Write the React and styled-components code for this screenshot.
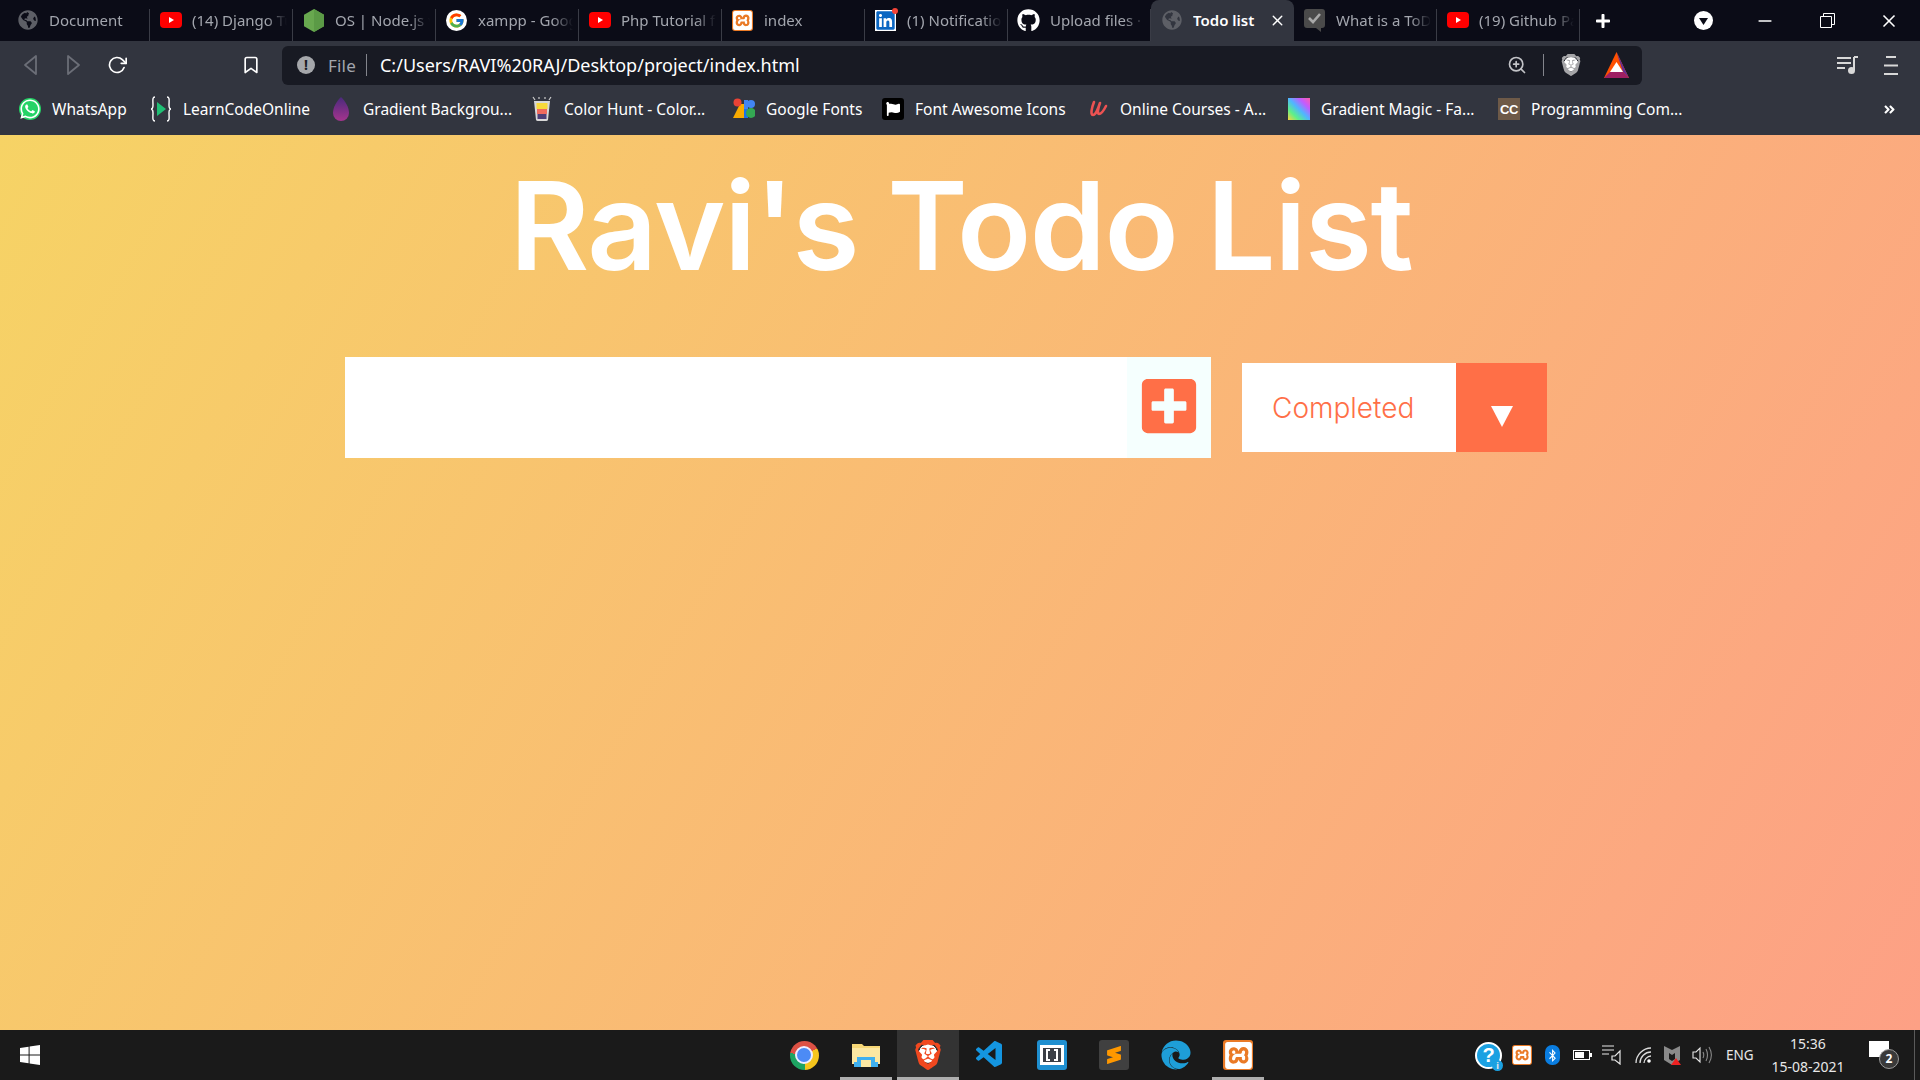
import React from 'react';
import styled, { createGlobalStyle } from 'styled-components';
import { FaGlobeAmericas, FaLinkedin, FaGithub, FaWhatsapp, FaPlusSquare, FaFlag, FaEdge, FaBluetoothB, FaPlus, FaAngleDoubleRight } from 'react-icons/fa';
import { FcGoogle } from 'react-icons/fc';
import { SiXampp, SiBrave, SiSublimetext } from 'react-icons/si';
import { VscVscode } from 'react-icons/vsc';
import { FiMinus, FiX, FiZoomIn, FiRotateCw, FiBookmark } from 'react-icons/fi';

const GlobalStyle = createGlobalStyle`
  html, body { margin: 0; padding: 0; }
  body { font-family: "Noto Sans", "Open Sans", sans-serif; background: #32353f; }
  * { box-sizing: border-box; }
`;

const Page = styled.div`
  width: 1920px;
  height: 1080px;
  display: flex;
  flex-direction: column;
  overflow: hidden;
`;

/* ---- browser chrome ---- */
const TabBar = styled.div`
  height: 41px;
  flex: none;
  background: #0b0c17;
  display: flex;
  align-items: stretch;
  padding-left: 7px;
`;
const Tab = styled.div`
  width: 143px;
  flex: none;
  display: flex;
  align-items: center;
  padding: 0 ${(p) => (p.$active ? 8 : 6)}px 1px 9px;
  gap: 10px;
  color: ${(p) => (p.$active ? '#ffffff' : '#a3a6ae')};
  font-size: 15px;
  font-weight: ${(p) => (p.$active ? 600 : 400)};
  background: ${(p) => (p.$active ? '#32353f' : 'transparent')};
  border-radius: ${(p) => (p.$active ? '8px 8px 0 0' : '0')};
  position: relative;
  &::after {
    content: "";
    display: ${(p) => (p.$active ? 'none' : 'block')};
    position: absolute;
    right: 0;
    top: 9px;
    bottom: 0;
    width: 1px;
    background: #3a3c46;
  }
`;
const TabTitle = styled.span`
  flex: 1;
  white-space: nowrap;
  overflow: hidden;
  -webkit-mask-image: ${(p) => (p.$active ? 'none' : 'linear-gradient(to right, #000 78%, transparent 100%)')};
  mask-image: ${(p) => (p.$active ? 'none' : 'linear-gradient(to right, #000 78%, transparent 100%)')};
`;
const TabIcon = styled.span`
  width: 23px;
  height: 23px;
  flex: none;
  display: flex;
  align-items: center;
  justify-content: center;
  position: relative;
  color: ${(p) => p.$color || '#fff'};
  font-size: ${(p) => p.$size || 22}px;
`;
const TabClose = styled.span`
  display: flex;
  color: #fff;
  font-size: 17px;
`;
const NewTab = styled.span`
  width: 46px;
  display: flex;
  align-items: center;
  justify-content: center;
  color: #fff;
  font-size: 16px;
`;
const WindowControls = styled.div`
  margin-left: auto;
  display: flex;
  align-items: center;
  color: #fff;
`;
const WinButton = styled.span`
  width: 62px;
  display: flex;
  align-items: center;
  justify-content: center;
  font-size: 20px;
`;
const Toolbar = styled.div`
  height: 48px;
  flex: none;
  background: #32353f;
  display: flex;
  align-items: center;
  padding: 0 8px 0 9px;
`;
const ToolSlot = styled.span`
  width: 43px;
  flex: none;
  display: flex;
  align-items: center;
  justify-content: center;
  color: #fff;
  font-size: 20px;
  margin-left: ${(p) => p.$ml || 0}px;
`;
const AddressBar = styled.div`
  width: 1360px;
  height: 39px;
  flex: none;
  margin-left: 10px;
  background: #181a23;
  border-radius: 6px;
  display: flex;
  align-items: center;
  padding: 0 13px 0 15px;
`;
const AddrInfo = styled.span`
  width: 18px;
  height: 18px;
  border-radius: 50%;
  background: #a5a7ab;
  color: #181a23;
  font-size: 14px;
  font-weight: 700;
  line-height: 18px;
  text-align: center;
`;
const FileLabel = styled.span`
  margin-left: 13px;
  color: #a3a6ae;
  font-size: 17px;
  letter-spacing: 0.2px;
`;
const AddrDivider = styled.span`
  width: 1px;
  height: 22px;
  background: #83858c;
  margin: ${(p) => p.$m || '0 13px 0 10px'};
`;
const UrlText = styled.span`
  color: #fff;
  font-size: 18px;
`;
const AddrRight = styled.div`
  margin-left: auto;
  display: flex;
  align-items: center;
  gap: 0;
  color: #c2c3c7;
`;
const BraveShield = styled.span`
  display: flex;
  margin-right: 22px;
  background: radial-gradient(circle at 50% 45%, #fff 0 42%, transparent 44%);
  color: #a5a5a8;
  font-size: 22px;
`;
const ToolRight = styled.div`
  margin-left: auto;
  display: flex;
  align-items: center;
`;
const BookmarksBar = styled.div`
  height: 46px;
  flex: none;
  background: #32353f;
  display: flex;
  align-items: center;
  padding: 0 24px 6px 19px;
  color: #fff;
  font-size: 15.5px;
`;
const Bookmark = styled.div`
  width: ${(p) => p.$w}px;
  flex: none;
  display: flex;
  align-items: center;
  gap: 11px;
  white-space: nowrap;
`;
const BookIcon = styled.span`
  width: 22px;
  height: 22px;
  flex: none;
  display: flex;
  align-items: center;
  justify-content: center;
  font-size: ${(p) => p.$size || 22}px;
  color: ${(p) => p.$color || '#fff'};
  background: ${(p) => p.$bg || 'transparent'};
  border-radius: ${(p) => p.$radius || 0}px;
`;
const CcText = styled.span`
  font-family: "Liberation Sans", sans-serif;
  font-size: 13px;
  font-weight: 700;
  color: #fff;
  letter-spacing: -0.5px;
`;
const MoreBookmarks = styled.span`
  margin-left: auto;
  display: flex;
  font-size: 13px;
`;

/* ---- the todo page ---- */
const Main = styled.main`
  flex: 1;
  background-image: linear-gradient(120deg, #f6d365 0%, #fda085 100%);
  display: flex;
  flex-direction: column;
`;
const Title = styled.h1`
  margin: 0;
  padding: 21px 0 0 2px;
  height: 222px;
  text-align: center;
  color: #fff;
  font-family: Inter, "Liberation Sans", sans-serif;
  font-size: 122px;
  font-weight: 600;
  line-height: 140px;
  letter-spacing: -1.4px;
`;
const FormRow = styled.form`
  display: flex;
  align-items: center;
  padding-left: 345px;
`;
const InputWrap = styled.div`
  width: 866px;
  height: 101px;
  display: flex;
  background: #fff;
`;
const TodoInput = styled.input`
  flex: 1;
  min-width: 0;
  border: 0;
  outline: 0;
  background: #fff;
`;
const AddButton = styled.button`
  width: 84px;
  border: 0;
  padding: 0 0 3px;
  background: #f5fffe;
  color: #ff6f47;
  font-size: 62px;
  display: flex;
  align-items: center;
  justify-content: center;
`;
const FilterBox = styled.div`
  width: 305px;
  height: 89px;
  margin-left: 31px;
  display: flex;
  background: #fff;
`;
const FilterLabel = styled.span`
  flex: 1;
  padding-left: 30px;
  display: flex;
  align-items: center;
  color: #ff6f47;
  font-family: Inter, "Liberation Sans", sans-serif;
  font-size: 28px;
  font-weight: 300;
`;
const FilterArrow = styled.span`
  width: 91px;
  background: #ff6f47;
  display: flex;
  align-items: center;
  justify-content: center;
  padding-top: 18px;
  &::before {
    content: "";
    border-left: 11px solid transparent;
    border-right: 11px solid transparent;
    border-top: 21px solid #fff;
  }
`;

/* ---- windows taskbar ---- */
const Taskbar = styled.footer`
  height: 50px;
  flex: none;
  background: #1a1a1a;
  display: flex;
  align-items: center;
`;
const StartButton = styled.div`
  width: 773px;
  flex: none;
  padding-left: 20px;
  display: flex;
  align-items: center;
`;
const Dock = styled.div`
  display: flex;
  height: 50px;
`;
const DockItem = styled.div`
  width: 62px;
  height: 50px;
  display: flex;
  align-items: center;
  justify-content: center;
  position: relative;
  font-size: ${(p) => p.$size || 30}px;
  color: ${(p) => p.$color || '#fff'};
  background: ${(p) => (p.$active ? '#333333' : 'transparent')};
  &::after {
    content: "";
    display: ${(p) => (p.$open ? 'block' : 'none')};
    position: absolute;
    bottom: 0;
    left: ${(p) => (p.$active ? 0 : 5)}px;
    right: ${(p) => (p.$active ? 0 : 5)}px;
    height: 3px;
    background: #aeaeae;
  }
`;
const BraveLion = styled.span`
  display: flex;
  background: radial-gradient(circle at 50% 45%, #fff 0 40%, transparent 42%);
`;
const Tile = styled.span`
  width: ${(p) => p.$s || 30}px;
  height: ${(p) => p.$s || 30}px;
  border-radius: ${(p) => p.$r || 3}px;
  display: flex;
  align-items: center;
  justify-content: center;
  background: ${(p) => p.$bg};
  color: ${(p) => p.$fg || '#fff'};
  font-size: ${(p) => p.$fs || 22}px;
  flex: none;
`;
const ChromeBall = styled.span`
  width: 29px;
  height: 29px;
  border-radius: 50%;
  background: conic-gradient(#dd5144 0 60deg, #f5c51c 60deg 180deg, #1da462 180deg 280deg, #dd5144 280deg);
  display: flex;
  align-items: center;
  justify-content: center;
  &::before {
    content: "";
    width: 14px;
    height: 14px;
    border-radius: 50%;
    background: #4c8bf5;
    border: 2px solid #eef;
  }
`;
const Tray = styled.div`
  margin-left: auto;
  height: 50px;
  display: flex;
  align-items: center;
  color: #fff;
  padding-right: 5px;
`;
const TrayIcon = styled.span`
  width: ${(p) => p.$w}px;
  margin-left: ${(p) => p.$ml || 0}px;
  display: flex;
  align-items: center;
  justify-content: center;
  position: relative;
  color: #e8e8e8;
`;
const HelpBall = styled.span`
  width: 27px;
  height: 27px;
  border-radius: 50%;
  background: #1ba1e2;
  border: 2px solid #fff;
  font-family: "Liberation Sans", sans-serif;
  font-size: 20px;
  font-weight: 700;
  line-height: 23px;
  text-align: center;
  color: #fff;
`;
const HelpBadge = styled.span`
  position: absolute;
  right: 0;
  bottom: -2px;
  width: 11px;
  height: 11px;
  border-radius: 50%;
  background: #1ba1e2;
  font-size: 9px;
  line-height: 11px;
  text-align: center;
  font-weight: 700;
`;
const BluetoothPill = styled.span`
  width: 15px;
  height: 20px;
  border-radius: 7px;
  background: #0a7de0;
  color: #fff;
  font-size: 13px;
  display: flex;
  align-items: center;
  justify-content: center;
`;
const LangLabel = styled.span`
  width: 28px;
  font-size: 13.5px;
  color: #e8e8e8;
  margin-left: 14px;
`;
const Clock = styled.div`
  width: 74px;
  margin-left: 17px;
  display: flex;
  flex-direction: column;
  align-items: center;
  font-size: 14px;
  line-height: 23px;
  color: #e8e8e8;
`;
const NotifWrap = styled.span`
  margin-left: 24px;
  width: 30px;
  height: 28px;
  position: relative;
  display: block;
`;
const NotifBubble = styled.span`
  position: absolute;
  left: 0;
  top: 0;
  width: 20px;
  height: 16px;
  background: #fff;
`;
const NotifCount = styled.span`
  position: absolute;
  right: 0;
  bottom: 0;
  width: 20px;
  height: 20px;
  border-radius: 50%;
  background: #3a3a3a;
  border: 1px solid #999;
  font-size: 12px;
  font-weight: 700;
  line-height: 18px;
  text-align: center;
  color: #fff;
`;
const TrayEnd = styled.span`
  width: 1px;
  height: 50px;
  background: #5a5a5a;
  margin-left: 15px;
`;

/* ---- favicons, drawn by hand where the packs have nothing close ---- */
const Youtube = () => (
  <svg width="22" height="16" viewBox="0 0 22 16">
    <rect width="22" height="16" rx="4" fill="#f00" />
    <path d="M9 5l5 3-5 3z" fill="#fff" />
  </svg>
);
const NodeHex = () => (
  <svg width="20" height="23" viewBox="0 0 20 23">
    <path d="M10 0l10 5.7v11.6L10 23 0 17.3V5.7z" fill="#68a84f" />
    <path d="M10 0l10 5.7v11.6L10 23z" fill="#5b9a46" />
  </svg>
);
const TodoCheck = () => (
  <svg width="21" height="23" viewBox="0 0 21 23">
    <path d="M3 0h15a3 3 0 013 3v13a3 3 0 01-3 3h-1v4l-5-4H3a3 3 0 01-3-3V3a3 3 0 013-3z" fill="#4a4a4a" />
    <path d="M5 9l4 4 7-8" stroke="#a8a8a8" strokeWidth="2.6" fill="none" />
  </svg>
);
const BatTriangle = () => (
  <svg width="25" height="26" viewBox="0 0 25 26">
    <path d="M12.5 0L25 26H0z" fill="#ff5000" />
    <path d="M12.5 0L25 26l-6-6z" fill="#662d91" />
    <path d="M0 26l6-6h13l6 6z" fill="#9e1f63" />
    <path d="M12.5 10L19 20H6z" fill="#fff" />
  </svg>
);
const BackArrow = ({ $flip }) => (
  <svg width="13" height="20" viewBox="0 0 13 20">
    <path d={$flip ? 'M1 1v18L12 10z' : 'M12 1v18L1 10z'} fill="none" stroke="#6b6e77" strokeWidth="1.8" strokeLinejoin="round" />
  </svg>
);
const LcoIcon = () => (
  <svg width="22" height="26" viewBox="0 0 22 26">
    <path d="M5 1C2 1 3 5 3 9s-2 4-2 4 2 0 2 4-1 8 2 8M17 1c3 0 2 4 2 8s2 4 2 4-2 0-2 4 1 8-2 8" fill="none" stroke="#fff" strokeWidth="1.4" />
    <path d="M7 6l9 7-9 7z" fill="#1fbf74" />
  </svg>
);
const GradDrop = () => (
  <svg width="16" height="24" viewBox="0 0 16 24">
    <defs>
      <linearGradient id="dropFill" x1="0" x2="0" y1="0" y2="1">
        <stop offset="0" stopColor="#4a2a7c" />
        <stop offset="1" stopColor="#a5348e" />
      </linearGradient>
    </defs>
    <path d="M8 0c4 4 8 10 8 16a8 8 0 01-16 0C0 10 4 4 8 0z" fill="url(#dropFill)" />
  </svg>
);
const HuntIcon = () => (
  <svg width="22" height="26" viewBox="0 0 22 26">
    <path d="M3 5h16l-2 19a2 2 0 01-2 1H7a2 2 0 01-2-1z" fill="#d8d8d8" />
    <rect x="5.5" y="7" width="11" height="6" fill="#f7d93b" />
    <rect x="6" y="13" width="10" height="5" fill="#ef6a5e" />
    <rect x="6.5" y="18" width="9" height="5" fill="#4d3f78" />
    <path d="M2 1l2 3M20 1l-2 3M8 1v2M14 1v2" stroke="#ccc" strokeWidth="1.2" />
  </svg>
);
const GFonts = () => (
  <svg width="22" height="22" viewBox="0 0 22 22">
    <path d="M0 20L7 6h4v14z" fill="#f9ab00" />
    <circle cx="4.5" cy="4.5" r="4" fill="#ea4335" />
    <rect x="11" y="2" width="4" height="9" fill="#4285f4" />
    <rect x="11" y="11" width="4" height="9" fill="#1a73e8" />
    <circle cx="18" cy="6" r="4" fill="#4285f4" />
    <circle cx="18" cy="15" r="5" fill="#34a853" />
  </svg>
);
const UdemyMark = () => (
  <svg width="20" height="20" viewBox="0 0 20 20">
    <path d="M6 3C4 8 2 16 5 16c3 0 5-6 7-12M12 4c-2 5-3 11-1 11 2 0 5-4 7-8" fill="none" stroke="#ec5252" strokeWidth="2.6" strokeLinecap="round" />
  </svg>
);
const WindowsLogo = () => (
  <svg width="20" height="20" viewBox="0 0 20 20">
    <path d="M0 3l8.6-1.2V9.5H0zM9.6 1.6L20 0v9.5H9.6zM0 10.5h8.6v7.7L0 17zM9.6 10.5H20V20L9.6 18.4z" fill="#fff" />
  </svg>
);
const FolderIcon = () => (
  <svg width="28" height="26" viewBox="0 0 28 26">
    <path d="M0 2h10l2 2h16v18H0z" fill="#f6d776" />
    <path d="M0 6h28v16H0z" fill="#fbe7a2" />
    <path d="M5 20v-5h18v5h3v5H2v-5z" fill="#3fb0ef" />
    <rect x="9" y="18" width="10" height="7" fill="#fbe7a2" />
  </svg>
);
const BracketsInner = () => (
  <svg width="24" height="20" viewBox="0 0 24 20">
    <rect width="24" height="20" fill="#fff" />
    <rect x="3" y="3" width="18" height="14" fill="#3b3f46" />
    <path d="M10 5H7v10h3M14 5h3v10h-3" fill="none" stroke="#fff" strokeWidth="2" />
  </svg>
);
const PlaylistIcon = () => (
  <svg width="21" height="20" viewBox="0 0 21 20">
    <path d="M0 3h14M0 8h14M0 13h8" stroke="#d8d8d8" strokeWidth="2" />
    <path d="M17 2v13" stroke="#d8d8d8" strokeWidth="2" />
    <path d="M17 2h4" stroke="#d8d8d8" strokeWidth="2" />
    <circle cx="14.5" cy="15.5" r="3.5" fill="#d8d8d8" />
  </svg>
);
const MenuIcon = () => (
  <svg width="14" height="19" viewBox="0 0 14 19">
    <path d="M2 1h10M0 9.5h14M0 18h14" stroke="#d8d8d8" strokeWidth="1.8" />
  </svg>
);
const RestoreIcon = () => (
  <svg width="15" height="15" viewBox="0 0 15 15">
    <path d="M3.5 3V.5h11v11H12M.5 3.5h11v11H.5z" fill="none" stroke="#fff" />
  </svg>
);
const DownCircle = () => (
  <svg width="19" height="19" viewBox="0 0 19 19">
    <circle cx="9.5" cy="9.5" r="9.5" fill="#fff" />
    <path d="M5 7h9l-4.5 7z" fill="#0b0c17" />
  </svg>
);
const BatteryIcon = () => (
  <svg width="19" height="10" viewBox="0 0 19 10">
    <rect x=".5" y=".5" width="16" height="9" fill="none" stroke="#fff" />
    <rect x="2" y="2" width="9" height="6" fill="#fff" />
    <rect x="17" y="3" width="2" height="4" fill="#fff" />
  </svg>
);
const ListSpeaker = () => (
  <svg width="20" height="20" viewBox="0 0 20 20">
    <path d="M0 1h12M0 5h12M0 9h7" stroke="#e8e8e8" strokeWidth="1.2" />
    <path d="M10 11h3l5-5v13l-5-4h-3z" fill="none" stroke="#e8e8e8" strokeWidth="1.2" />
  </svg>
);
const WifiIcon = () => (
  <svg width="17" height="17" viewBox="0 0 17 17">
    <path d="M1 16C1 8 8 1 16 1M5 16c0-6 5-11 11-11M9 16c0-3 3-7 7-7" fill="none" stroke="#dcdcdc" strokeWidth="1.3" />
    <circle cx="14" cy="14" r="1.8" fill="#fff" />
  </svg>
);
const McAfeeIcon = () => (
  <svg width="19" height="20" viewBox="0 0 19 20">
    <path d="M1 1l8 4 8-4v14l-8 5-8-5z" fill="#8a8a8a" />
    <path d="M6 8l3 2 3-2v6l-3 2-3-2z" fill="#1a1a1a" />
    <path d="M13 13l5 7H8z" fill="#e22" />
  </svg>
);
const VolumeIcon = () => (
  <svg width="20" height="18" viewBox="0 0 20 18">
    <path d="M1 6h3l4-4v14l-4-4H1z" fill="none" stroke="#e8e8e8" strokeWidth="1.1" />
    <path d="M11 6c1 2 1 4 0 6M14 3c2 4 2 8 0 12M17 1c3 5 3 11 0 16" fill="none" stroke="#888" strokeWidth="1.1" />
  </svg>
);

const XamppTile = ({ s = 22, fs = 19 }) => (
  <Tile $s={s} $bg="#ea7a26" $fs={fs}>
    <SiXampp />
  </Tile>
);

const LinkedinDot = styled.span`
  position: absolute;
  right: -1px;
  top: -1px;
  width: 6px;
  height: 6px;
  border-radius: 50%;
  background: #f44336;
`;
const LinkedinBack = styled.span`
  background: #fff;
  display: flex;
  line-height: 0;
`;

const tabs = [
  { title: 'Document', icon: <TabIcon $color="#5d5f66" $size={20}><FaGlobeAmericas /></TabIcon> },
  { title: '(14) Django Tutorial', icon: <TabIcon><Youtube /></TabIcon> },
  { title: 'OS | Node.js v16', icon: <TabIcon><NodeHex /></TabIcon> },
  { title: 'xampp - Google', icon: <TabIcon><Tile $s={21} $r={11} $bg="#fff" $fs={17}><FcGoogle /></Tile></TabIcon> },
  { title: 'Php Tutorial for', icon: <TabIcon><Youtube /></TabIcon> },
  { title: 'index', icon: <TabIcon><XamppTile s={21} /></TabIcon> },
  { title: '(1) Notifications', icon: <TabIcon $color="#0a66c2" $size={21}><LinkedinBack><FaLinkedin /></LinkedinBack><LinkedinDot /></TabIcon> },
  { title: 'Upload files · a', icon: <TabIcon $size={23}><FaGithub /></TabIcon> },
  { title: 'Todo list', active: true, icon: <TabIcon $color="#5d5f66" $size={20}><FaGlobeAmericas /></TabIcon> },
  { title: 'What is a ToDo', icon: <TabIcon><TodoCheck /></TabIcon> },
  { title: '(19) Github Pages', icon: <TabIcon><Youtube /></TabIcon> },
];

const bookmarks = [
  { w: 131, title: 'WhatsApp', icon: <BookIcon $bg="#25d366" $radius={11}><FaWhatsapp /></BookIcon> },
  { w: 180, title: 'LearnCodeOnline', icon: <BookIcon><LcoIcon /></BookIcon> },
  { w: 201, title: 'Gradient Backgrou...', icon: <BookIcon><GradDrop /></BookIcon> },
  { w: 202, title: 'Color Hunt - Color...', icon: <BookIcon><HuntIcon /></BookIcon> },
  { w: 149, title: 'Google Fonts', icon: <BookIcon><GFonts /></BookIcon> },
  { w: 205, title: 'Font Awesome Icons', icon: <BookIcon $bg="#000" $radius={3} $size={14}><FaFlag /></BookIcon> },
  { w: 201, title: 'Online Courses - A...', icon: <BookIcon><UdemyMark /></BookIcon> },
  { w: 210, title: 'Gradient Magic - Fa...', icon: <BookIcon $bg="linear-gradient(45deg,#ffd23c,#5df08a,#4fb6ff,#c25cff,#ff5ca8)" /> },
  { w: 181, title: 'Programming Com...', icon: <BookIcon $bg="#6e5a48"><CcText>CC</CcText></BookIcon> },
];

const App = () => {
  return (
    <Page>
      <GlobalStyle />
      <TabBar>
        {tabs.map((t) => (
          <Tab key={t.title} $active={t.active}>
            {t.icon}
            <TabTitle $active={t.active}>{t.title}</TabTitle>
            {t.active && <TabClose><FiX /></TabClose>}
          </Tab>
        ))}
        <NewTab><FaPlus /></NewTab>
        <WindowControls>
          <WinButton><DownCircle /></WinButton>
          <WinButton><FiMinus /></WinButton>
          <WinButton><RestoreIcon /></WinButton>
          <WinButton><FiX /></WinButton>
        </WindowControls>
      </TabBar>
      <Toolbar>
        <ToolSlot><BackArrow /></ToolSlot>
        <ToolSlot><BackArrow $flip /></ToolSlot>
        <ToolSlot><FiRotateCw /></ToolSlot>
        <ToolSlot $ml={91}><FiBookmark /></ToolSlot>
        <AddressBar>
          <AddrInfo>!</AddrInfo>
          <FileLabel>File</FileLabel>
          <AddrDivider />
          <UrlText>C:/Users/RAVI%20RAJ/Desktop/project/index.html</UrlText>
          <AddrRight>
            <FiZoomIn size={20} />
            <AddrDivider $m="0 16px 0 16px" />
            <BraveShield><SiBrave /></BraveShield>
            <BatTriangle />
          </AddrRight>
        </AddressBar>
        <ToolRight>
          <ToolSlot><PlaylistIcon /></ToolSlot>
          <ToolSlot><MenuIcon /></ToolSlot>
        </ToolRight>
      </Toolbar>
      <BookmarksBar>
        {bookmarks.map((b) => (
          <Bookmark key={b.title} $w={b.w}>
            {b.icon}
            <span>{b.title}</span>
          </Bookmark>
        ))}
        <MoreBookmarks><FaAngleDoubleRight /></MoreBookmarks>
      </BookmarksBar>

      <Main>
        <Title>Ravi's Todo List</Title>
        <FormRow>
          <InputWrap>
            <TodoInput type="text" />
            <AddButton type="button"><FaPlusSquare /></AddButton>
          </InputWrap>
          <FilterBox>
            <FilterLabel>Completed</FilterLabel>
            <FilterArrow />
          </FilterBox>
        </FormRow>
      </Main>

      <Taskbar>
        <StartButton><WindowsLogo /></StartButton>
        <Dock>
          <DockItem><ChromeBall /></DockItem>
          <DockItem $open><FolderIcon /></DockItem>
          <DockItem $open $active $color="#f1481f"><BraveLion><SiBrave /></BraveLion></DockItem>
          <DockItem $color="#1495e0" $size={32}><VscVscode /></DockItem>
          <DockItem><Tile $bg="#1f8fd0"><BracketsInner /></Tile></DockItem>
          <DockItem><Tile $bg="#404040" $fg="#ff9800" $fs={18}><SiSublimetext /></Tile></DockItem>
          <DockItem $color="#1e9ed8"><FaEdge /></DockItem>
          <DockItem $open><XamppTile s={30} fs={27} /></DockItem>
        </Dock>
        <Tray>
          <TrayIcon $w={29}><HelpBall>?</HelpBall><HelpBadge>i</HelpBadge></TrayIcon>
          <TrayIcon $w={20} $ml={9}><XamppTile s={20} fs={18} /></TrayIcon>
          <TrayIcon $w={15} $ml={13}><BluetoothPill><FaBluetoothB /></BluetoothPill></TrayIcon>
          <TrayIcon $w={19} $ml={13}><BatteryIcon /></TrayIcon>
          <TrayIcon $w={20} $ml={10}><ListSpeaker /></TrayIcon>
          <TrayIcon $w={17} $ml={13}><WifiIcon /></TrayIcon>
          <TrayIcon $w={19} $ml={11}><McAfeeIcon /></TrayIcon>
          <TrayIcon $w={20} $ml={10}><VolumeIcon /></TrayIcon>
          <LangLabel>ENG</LangLabel>
          <Clock><span>15:36</span><span>15-08-2021</span></Clock>
          <NotifWrap><NotifBubble /><NotifCount>2</NotifCount></NotifWrap>
          <TrayEnd />
        </Tray>
      </Taskbar>
    </Page>
  );
};

export default App;
